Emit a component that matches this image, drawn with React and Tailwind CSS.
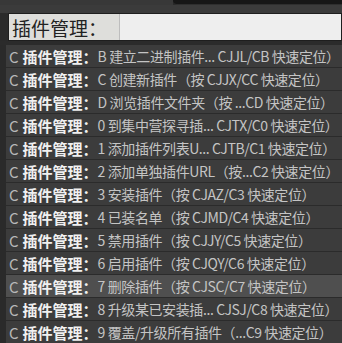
import React from 'react';

const rows = [
  { key: 'B', text: '建立二进制插件... CJJL/CB 快速定位）' },
  { key: 'C', text: '创建新插件（按 CJJX/CC 快速定位）' },
  { key: 'D', text: '浏览插件文件夹（按 ...CD 快速定位）' },
  { key: '0', text: '到集中营探寻插... CJTX/C0 快速定位）' },
  { key: '1', text: '添加插件列表U... CJTB/C1 快速定位）' },
  { key: '2', text: '添加单独插件URL（按...C2 快速定位）' },
  { key: '3', text: '安装插件（按 CJAZ/C3 快速定位）' },
  { key: '4', text: '已装名单（按 CJMD/C4 快速定位）' },
  { key: '5', text: '禁用插件（按 CJJY/C5 快速定位）' },
  { key: '6', text: '启用插件（按 CJQY/C6 快速定位）' },
  { key: '7', text: '删除插件（按 CJSC/C7 快速定位）', active: true },
  { key: '8', text: '升级某已安装插... CJSJ/C8 快速定位）' },
  { key: '9', text: '覆盖/升级所有插件（...C9 快速定位）' },
];

const font = { fontFamily: '"Noto Sans CJK SC", "Noto Sans", sans-serif' };

const App = () => {
  return (
    <div className="w-[342px] h-[343px] overflow-hidden bg-[#2a2a2a]" style={font}>
      {/* Tab strip */}
      <div className="flex h-[5px]">
        <div className="w-[173px] bg-[#383838]"></div>
        <div className="flex-1 bg-[#161616] rounded-bl-[4px] border-b border-[#2e2e2e]"></div>
      </div>
      <div className="h-[8px] bg-[#3b3b3b]"></div>

      {/* Command input */}
      <div className="flex h-[28px] pl-[8px] bg-[#2a2a2a]">
        <div className="flex flex-1 border border-[#1e1e1e] bg-[#eeeeee]">
          <div className="flex items-center pl-[3px] pr-[12px] bg-[#dededb] border-r border-[#bdbdbd] text-[19px] leading-none text-[#222]">
            插件管理：
          </div>
          <div className="flex-1"></div>
        </div>
      </div>
      <div className="h-[4px] bg-[#2b2b2b]"></div>

      {/* Results */}
      <div className="pl-[6px]">
        {rows.map((row) => (
          <div
            key={row.key}
            className={`flex items-center h-[23px] pl-[3px] border-b border-[#2b2b2b] whitespace-nowrap leading-none ${
              row.active ? 'bg-[#4f4f4f]' : 'bg-[#3c3c3c]'
            }`}
          >
            <span className="text-[15px] text-[#b8b8b8] mr-[4px]">C</span>
            <span className="text-[15px] font-bold text-[#f0f0f0]">插件管理：</span>
            <span className="text-[14px] tracking-[-0.4px] text-[#c4c4c4]">{row.key} {row.text}</span>
          </div>
        ))}
      </div>
    </div>
  );
};

export default App;
